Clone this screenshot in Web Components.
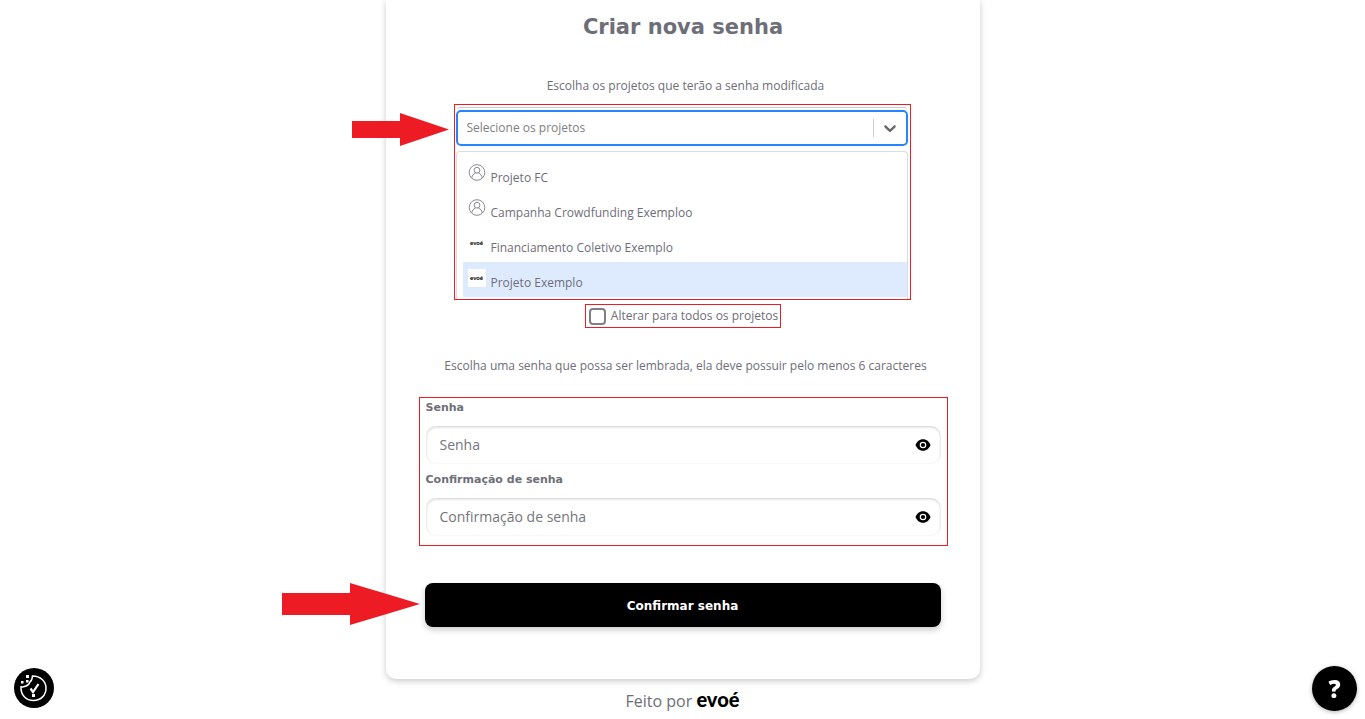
<!DOCTYPE html>
<html lang="pt-BR">
<head>
<meta charset="utf-8">
<title>Criar nova senha</title>
<style>
  body { margin: 0; background: #fff; color: #6e6e78; font: 12px/20px "Open Sans", sans-serif; }
</style>
</head>
<body>
<password-page></password-page>
<script>
const define = (name, html, setup) => {
  const template = document.createElement('template');
  template.innerHTML = html;
  customElements.define(name, class extends HTMLElement {
    constructor() {
      super();
      this.attachShadow({ mode: 'open' }).append(template.content.cloneNode(true));
    }
    connectedCallback() { if (setup) setup(this, this.shadowRoot); }
  });
};

define('mark-box', `
  <style>
    :host { display: block; box-sizing: border-box; position: relative; border: 1px solid #ed1c24; }
  </style>
  <slot></slot>`);

define('mark-arrow', `
  <style>
    :host { position: absolute; right: 100%; }
    svg { display: block; fill: #ed1c24; }
  </style>
  <svg aria-hidden="true"><polygon></polygon></svg>`, (el, root) => {
  const large = el.hasAttribute('large');
  const [w, h, neck, a, b] = large ? [138, 42, 68, 10, 32] : [97, 33, 48, 8, 25];
  const svg = root.querySelector('svg');
  svg.setAttribute('width', w);
  svg.setAttribute('height', h);
  svg.firstElementChild.setAttribute('points',
    `0,${a} ${neck},${a} ${neck},0 ${w},${h / 2} ${neck},${h} ${neck},${b} 0,${b}`);
});

define('project-option', `
  <style>
    :host { display: flex; gap: 5px; box-sizing: border-box; height: 35px; padding: 7px 5px 5px; }
    :host([aria-selected="true"]) { background: #deebff; }
    .icon { flex: none; width: 18px; height: 18px; }
    .label { align-self: flex-end; line-height: 18px; }
    svg { display: block; fill: none; stroke: #8a8a90; }
    .brand { background: #fff; color: #000; font: 900 6px/18px Lato, sans-serif; text-align: center; }
    :host([brand]) svg, :host(:not([brand])) .brand { display: none; }
  </style>
  <svg class="icon" viewBox="0 0 18 18" aria-hidden="true">
    <circle cx="9" cy="8.500" r="7.800"/><circle cx="9" cy="6.200" r="2.900"/>
    <path d="M3.800 14c.3-2.600 1.600-4.200 3.700-4.800M14.200 14c-.3-2.600-1.600-4.200-3.700-4.800"/>
  </svg>
  <span class="icon brand">evoé</span>
  <span class="label"><slot></slot></span>`);

define('project-select', `
  <style>
    :host { display: block; padding: 2px 2px 0 1px; }
    .edge { height: 3px; margin: 0 1px; box-sizing: border-box; border-top: 1px solid #ccc; border-radius: 4px 4px 0 0; }
    .control { position: relative; }
    select { display: block; width: 100%; height: 36px; box-sizing: border-box; margin: 0; padding: 0 46px 0 9px;
      appearance: none; background: #fff; border: 2px solid #2684ff; border-radius: 5px; color: #808080; font: inherit; outline: 0; }
    .end { position: absolute; top: 8px; right: 8px; display: flex; align-items: center; pointer-events: none; }
    .end i { width: 1px; height: 18px; margin-right: 6px; background: #ccc; }
    .end svg { fill: #666; }
    .menu { margin-top: 5px; padding: 5px 0 2px 6px; border: 1px solid #dcdcdc; border-bottom: 0; border-radius: 4px 4px 0 0; }
  </style>
  <div class="edge"></div>
  <div class="control">
    <select aria-label="Projetos"><option>Selecione os projetos</option></select>
    <span class="end"><i></i><svg width="20" height="20" viewBox="0 0 20 20" aria-hidden="true"><path d="M4.516 7.548c.436-.446 1.043-.481 1.576 0L10 11.295l3.908-3.747c.533-.481 1.141-.446 1.574 0 .436.445.408 1.197 0 1.615-.406.418-4.695 4.502-4.695 4.502a1.100 1.100 0 0 1-1.576 0s-4.287-4.084-4.695-4.502-.436-1.170 0-1.615z"/></svg></span>
  </div>
  <div class="menu" role="listbox" aria-label="Projetos"><slot></slot></div>`);

define('all-projects', `
  <style>
    :host { display: block; }
    label { display: flex; align-items: center; gap: 5px; height: 22px; padding: 0 2px 0 3px; }
    input { appearance: none; width: 17px; height: 17px; margin: 0; box-sizing: border-box; border: 2px solid #808080; border-radius: 4px; background: #fff; }
  </style>
  <label><input type="checkbox"><span><slot></slot></span></label>`);

define('password-field', `
  <style>
    :host { display: block; }
    label { display: block; margin-bottom: 8px; font: 700 11px/20px "DejaVu Sans", sans-serif; }
    .box { position: relative; }
    input { display: block; width: 100%; height: 38px; box-sizing: border-box; margin: 0; padding: 0 44px 2px 14px; border: 0; border-radius: 10px;
      background: #fff; box-shadow: inset 0 1px 3px rgba(0,0,0,.2); color: inherit; font: 14px "Open Sans", sans-serif; outline: 0; }
    input::placeholder { color: #75757c; opacity: 1; }
    button { position: absolute; right: 10px; top: 11px; display: block; width: 16px; height: 16px; padding: 0; border: 0; background: none; }
    svg { display: block; }
  </style>
  <label for="field"></label>
  <div class="box">
    <input id="field" type="password">
    <button type="button" aria-label="Mostrar senha"><svg width="16" height="16" viewBox="0 0 16 16"><path d="M8 2.200C4.400 2.200 1.800 4.600.500 8c1.300 3.400 3.900 5.800 7.500 5.800s6.200-2.400 7.500-5.800C14.200 4.600 11.600 2.200 8 2.200z"/><circle cx="8" cy="8" r="2.700" stroke="#fff" stroke-width="1.200"/></svg></button>
  </div>`, (el, root) => {
  root.querySelector('label').textContent = el.getAttribute('label');
  root.querySelector('input').placeholder = el.getAttribute('label');
});

define('submit-button', `
  <style>
    :host { display: block; }
    button { display: block; width: 100%; height: 44px; margin: 0; padding: 2px 0 0; border: 0; border-radius: 8px; background: #000;
      color: #fff; font: 700 12px/20px "DejaVu Sans", sans-serif; box-shadow: 0 3px 6px rgba(0,0,0,.2); }
  </style>
  <button type="submit"><slot></slot></button>`);

define('cookie-button', `
  <style>
    :host { position: fixed; left: 14px; bottom: 11px; }
    button { display: grid; place-items: center; width: 40px; height: 40px; padding: 0; border: 0; border-radius: 50%; background: #000; }
  </style>
  <button type="button" aria-label="Cookies"><svg width="40" height="40" viewBox="0 0 40 40" fill="none" stroke="#fff" stroke-width="1.500">
    <path d="M18.500 8c-.2 3-1 5-2.700 6.200-.8 2.200-2.300 3.600-4.500 4-1.300.6-2.800.8-4.300.600C6.500 27 12 32.500 19.500 32.500S32 27 32 20.200 26.500 8 18.500 8z"/>
    <path d="M16.500 20.500l2.500 3.500 5.500-8" stroke-width="2.200"/>
    <g fill="#fff" stroke="none"><rect x="18" y="26" width="3" height="3"/><rect x="12" y="7" width="3" height="3"/><rect x="7" y="13" width="2.500" height="2.500"/><rect x="12" y="12" width="2.500" height="2.500"/></g>
  </svg></button>`);

define('help-button', `
  <style>
    :host { position: fixed; right: 8px; bottom: 8px; }
    button { display: block; width: 45px; height: 45px; padding: 0; border: 0; border-radius: 50%; background: #000; color: #fff;
      font: 800 24px/45px "Open Sans", sans-serif; box-shadow: 0 1px 4px rgba(0,0,0,.3); }
  </style>
  <button type="button" aria-label="Ajuda">?</button>`);

define('page-footer', `
  <style>
    :host { display: block; margin-top: 8px; text-align: center; font-size: 16px; line-height: 24px; }
    a { color: #000; font-family: Lato, sans-serif; font-weight: 900; font-size: 20px; text-decoration: none; }
  </style>
  Feito por <a href="#">evoé</a>`);

define('password-page', `
  <style>
    :host { display: block; }
    main { box-sizing: border-box; width: 100%; max-width: 594px; margin: 0 auto; padding: 11px 32px 52px 33px; border-radius: 0 0 10px 10px;
      box-shadow: 0 2px 6px rgba(0,0,0,.22); }
    form { display: flex; flex-direction: column; }
    h1 { margin: 0 0 33px; font: 700 21px/32px "DejaVu Sans", sans-serif; text-align: center; }
    p { margin: 0; padding-left: 5px; text-align: center; }
    .projects { margin: 8px 37px 4px 35px; }
    .all { align-self: center; margin-bottom: 28px; }
    .fields { display: grid; gap: 6px; margin: 21px 0 37px; padding: 0 6px 9px; }
    .submit { position: relative; margin: 0 7px 0 6px; }
    .projects mark-arrow { top: 8px; margin-right: 6px; }
    .submit mark-arrow { top: 0; margin-right: 5px; }
  </style>
  <main>
    <form>
      <h1>Criar nova senha</h1>
      <p>Escolha os projetos que terão a senha modificada</p>
      <mark-box class="projects">
        <mark-arrow></mark-arrow>
        <project-select>
          <project-option role="option">Projeto FC</project-option>
          <project-option role="option">Campanha Crowdfunding Exemploo</project-option>
          <project-option role="option" brand>Financiamento Coletivo Exemplo</project-option>
          <project-option role="option" brand aria-selected="true">Projeto Exemplo</project-option>
        </project-select>
      </mark-box>
      <mark-box class="all"><all-projects>Alterar para todos os projetos</all-projects></mark-box>
      <p>Escolha uma senha que possa ser lembrada, ela deve possuir pelo menos 6 caracteres</p>
      <mark-box class="fields">
        <password-field label="Senha"></password-field>
        <password-field label="Confirmação de senha"></password-field>
      </mark-box>
      <div class="submit">
        <mark-arrow large></mark-arrow>
        <submit-button>Confirmar senha</submit-button>
      </div>
    </form>
  </main>
  <page-footer></page-footer>
  <cookie-button></cookie-button>
  <help-button></help-button>`);
</script>
</body>
</html>
